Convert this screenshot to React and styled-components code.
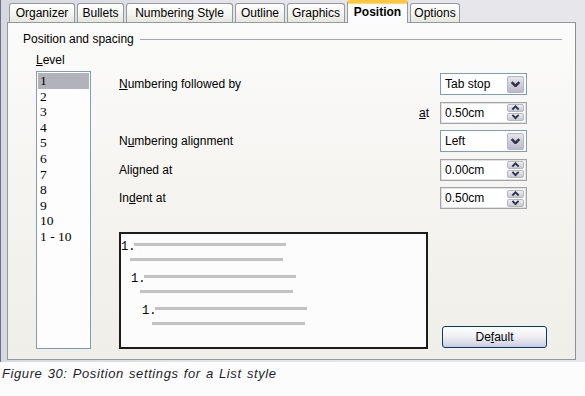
import * as React from "react";
import styled, { createGlobalStyle, css } from "styled-components";

// *** global
const GlobalStyle = createGlobalStyle`
  html, body {
    margin: 0;
    padding: 0;
    background: #fcfcfc;
  }
  body {
    font-family: "Liberation Sans", Arial, sans-serif;
    font-size: 12px;
    color: #000;
  }
`;

// *** data
const tabs = [
  { label: "Organizer", width: 66 },
  { label: "Bullets", width: 47 },
  { label: "Numbering Style", width: 107 },
  { label: "Outline", width: 50 },
  { label: "Graphics", width: 58 },
  { label: "Position", width: 61, active: true },
  { label: "Options", width: 50 },
];

const levels = ["1", "2", "3", "4", "5", "6", "7", "8", "9", "10", "1 - 10"];

// *** styled components
const Page = styled.div`
  width: 585px;
  height: 396px;
  display: flex;
  flex-flow: column nowrap;
`;
const Window = styled.div`
  height: 362px;
  box-sizing: border-box;
  padding: 0 9px 0 6px;
  border-left: 1px solid #6e6e8e;
  background: linear-gradient(90deg, #d8d8e0 0, #e4e4ea 40%, #e6e6eb 100%);
  display: flex;
  flex-flow: column nowrap;
`;
const TabBar = styled.div`
  height: 22px;
  display: flex;
  align-items: flex-end;
  gap: 2px;
  padding-left: 2px;
  position: relative;
  z-index: 1;
`;
const Tab = styled.div`
  box-sizing: border-box;
  width: ${(p) => p.$width}px;
  height: 19px;
  border: 1px solid #919b9c;
  border-bottom: none;
  border-radius: 3px 3px 0 0;
  background: linear-gradient(#ffffff, #f3f3ef 60%, #e6e5de);
  display: flex;
  align-items: center;
  justify-content: center;
  font-size: 12px;
  white-space: nowrap;

  ${(p) =>
    p.$active &&
    css`
      height: 23px;
      margin-bottom: -1px;
      background: #fcfcfe;
      border-top: 3px solid #ffc83c;
      box-shadow: inset 0 1px 0 #ffd77a;
      font-weight: bold;
      padding-bottom: 2px;
    `}
`;
const Panel = styled.div`
  box-sizing: border-box;
  height: 338px;
  border: 1px solid #919b9c;
  border-right-color: #8a9293;
  background: linear-gradient(#fbfbfb, #f5f4f0 50%, #efeee8);
  padding: 9px 13px 0 15px;
  display: flex;
  flex-flow: column nowrap;
`;
const Legend = styled.div`
  height: 14px;
  line-height: 14px;
  display: flex;
  align-items: center;
  gap: 6px;

  &::after {
    content: "";
    flex: 1;
    height: 1px;
    background: #a4a4aa;
  }
`;
const Body = styled.div`
  display: flex;
  margin: 7px 0 0 13px;
`;
const LevelColumn = styled.div`
  width: 55px;
  display: flex;
  flex-flow: column nowrap;
  gap: 4px;
`;
const Label = styled.div`
  line-height: 14px;
  white-space: nowrap;
  ${(p) => p.$end && "justify-self: end;"}
`;
const Accel = styled.span`
  text-decoration: underline;
  text-underline-offset: 1px;
`;
const ListBox = styled.div`
  box-sizing: border-box;
  height: 278px;
  border: 1px solid #7f9db9;
  background: #fdfdfd;
  padding: 1px;
`;
const ListItem = styled.div`
  height: 15.6px;
  line-height: 15.6px;
  padding-left: 2px;
  font-family: "Liberation Serif", "Times New Roman", serif;
  font-size: 13.5px;
  background: ${(p) => (p.$selected ? "#b2b2bb" : "transparent")};
`;
const Main = styled.div`
  margin-left: 28px;
  width: 428px;
  display: flex;
  flex-flow: column nowrap;
`;
const Form = styled.div`
  margin-top: 20px;
  width: 408px;
  display: grid;
  grid-template-columns: 1fr 87px;
  grid-auto-rows: 22px;
  column-gap: 11px;
  row-gap: 6.5px;
  align-items: center;
`;
const Field = styled.div`
  box-sizing: border-box;
  height: 22px;
  background: #fff;
  display: flex;
  align-items: center;
  justify-content: space-between;
  padding: 0 2px 0 4px;
  ${(p) =>
    p.$kind === "select"
      ? css`
          border: 1px solid #7f9db9;
        `
      : css`
          border: 1px solid #a0a4a8;
          box-shadow: inset 0 0 0 1px #e2e2e2;
        `}
`;
const DropButton = styled.div`
  box-sizing: border-box;
  width: 17px;
  height: 17px;
  border: 1px solid #b4b6c8;
  border-radius: 2px;
  background: linear-gradient(#e6e6ee, #cbcbd8 60%, #b9b9ca);
  display: flex;
  align-items: center;
  justify-content: center;
`;
const Spin = styled.div`
  width: 17px;
  height: 17px;
  display: flex;
  flex-flow: column nowrap;
  gap: 1px;
`;
const SpinHalf = styled.div`
  box-sizing: border-box;
  height: 8px;
  border: 1px solid #b4b6c0;
  border-radius: 2px;
  background: linear-gradient(#eeeef2, #c8c8d4);
  display: flex;
  align-items: center;
  justify-content: center;
`;
const Bottom = styled.div`
  margin-top: 23px;
  display: flex;
  align-items: flex-end;
  gap: 14px;
`;
const Preview = styled.div`
  box-sizing: border-box;
  width: 309px;
  height: 117px;
  border: 2px solid #1c1c1c;
  background: #fcfcfc;
  padding-top: 7px;
  display: flex;
  flex-flow: column nowrap;
  gap: 12px;
`;
const PreviewItem = styled.div`
  padding-left: ${(p) => p.$indent}px;
`;
const PreviewRow = styled.div`
  display: flex;
  align-items: flex-start;
  height: 12px;
`;
const Num = styled.span`
  width: 13px;
  font-family: "Liberation Mono", "Courier New", monospace;
  font-size: 12px;
  line-height: 12px;
`;
const Bar = styled.div`
  width: ${(p) => p.$width}px;
  height: 3px;
  background: #c2c2c2;
  margin: ${(p) => p.$margin};
`;
const Button = styled.button`
  box-sizing: border-box;
  width: 105px;
  height: 22px;
  margin-bottom: 1px;
  border: 1px solid #003c74;
  border-radius: 3px;
  background: linear-gradient(#ffffff, #f0f0f4 45%, #d8d8e6 85%, #c8c8da);
  font-family: "Liberation Sans", Arial, sans-serif;
  font-size: 12px;
  color: #000;
  padding: 0;
`;
const Caption = styled.div`
  height: 24px;
  line-height: 24px;
  padding-left: 2px;
  font-style: italic;
  font-size: 13px;
  letter-spacing: 0.6px;
  word-spacing: 1px;
  color: #1c1c2a;
`;

// *** icons
const Chevron = ({ up, size = 11, weight = 2.4 }) => (
  <svg width={size} height={size * 0.6} viewBox="0 0 10 6">
    <path
      d={up ? "M1.5 5 L5 1.5 L8.5 5" : "M1.5 1 L5 4.5 L8.5 1"}
      fill="none"
      stroke="#34344e"
      strokeWidth={weight}
    />
  </svg>
);

const Select = ({ value }) => (
  <Field $kind="select">
    {value}
    <DropButton>
      <Chevron />
    </DropButton>
  </Field>
);

const Spinner = ({ value }) => (
  <Field $kind="spin">
    {value}
    <Spin>
      <SpinHalf>
        <Chevron up size={9} weight={2.2} />
      </SpinHalf>
      <SpinHalf>
        <Chevron size={9} weight={2.2} />
      </SpinHalf>
    </Spin>
  </Field>
);

const App = () => {
  return (
    <>
      <GlobalStyle />
      <Page>
        <Window>
          <TabBar>
            {tabs.map((t) => (
              <Tab key={t.label} $width={t.width} $active={t.active}>
                {t.label}
              </Tab>
            ))}
          </TabBar>
          <Panel>
            <Legend>Position and spacing</Legend>
            <Body>
              <LevelColumn>
                <Label>
                  <Accel>L</Accel>evel
                </Label>
                <ListBox>
                  {levels.map((l, i) => (
                    <ListItem key={l} $selected={i === 0}>
                      {l}
                    </ListItem>
                  ))}
                </ListBox>
              </LevelColumn>
              <Main>
                <Form>
                  <Label>
                    <Accel>N</Accel>umbering followed by
                  </Label>
                  <Select value="Tab stop" />
                  <Label $end>
                    <Accel>a</Accel>t
                  </Label>
                  <Spinner value="0.50cm" />
                  <Label>
                    N<Accel>u</Accel>mbering alignment
                  </Label>
                  <Select value="Left" />
                  <Label>Aligned at</Label>
                  <Spinner value="0.00cm" />
                  <Label>
                    In<Accel>d</Accel>ent at
                  </Label>
                  <Spinner value="0.50cm" />
                </Form>
                <Bottom>
                  <Preview>
                    {[0, 10, 21].map((indent) => (
                      <PreviewItem key={indent} $indent={indent}>
                        <PreviewRow>
                          <Num>1.</Num>
                          <Bar $width={152} $margin="2px 0 0 0" />
                        </PreviewRow>
                        <Bar $width={153} $margin={`5px 0 0 ${indent === 21 ? 10 : 9}px`} />
                      </PreviewItem>
                    ))}
                  </Preview>
                  <Button>
                    De<Accel>f</Accel>ault
                  </Button>
                </Bottom>
              </Main>
            </Body>
          </Panel>
        </Window>
        <Caption>Figure 30: Position settings for a List style</Caption>
      </Page>
    </>
  );
};

export default App;
